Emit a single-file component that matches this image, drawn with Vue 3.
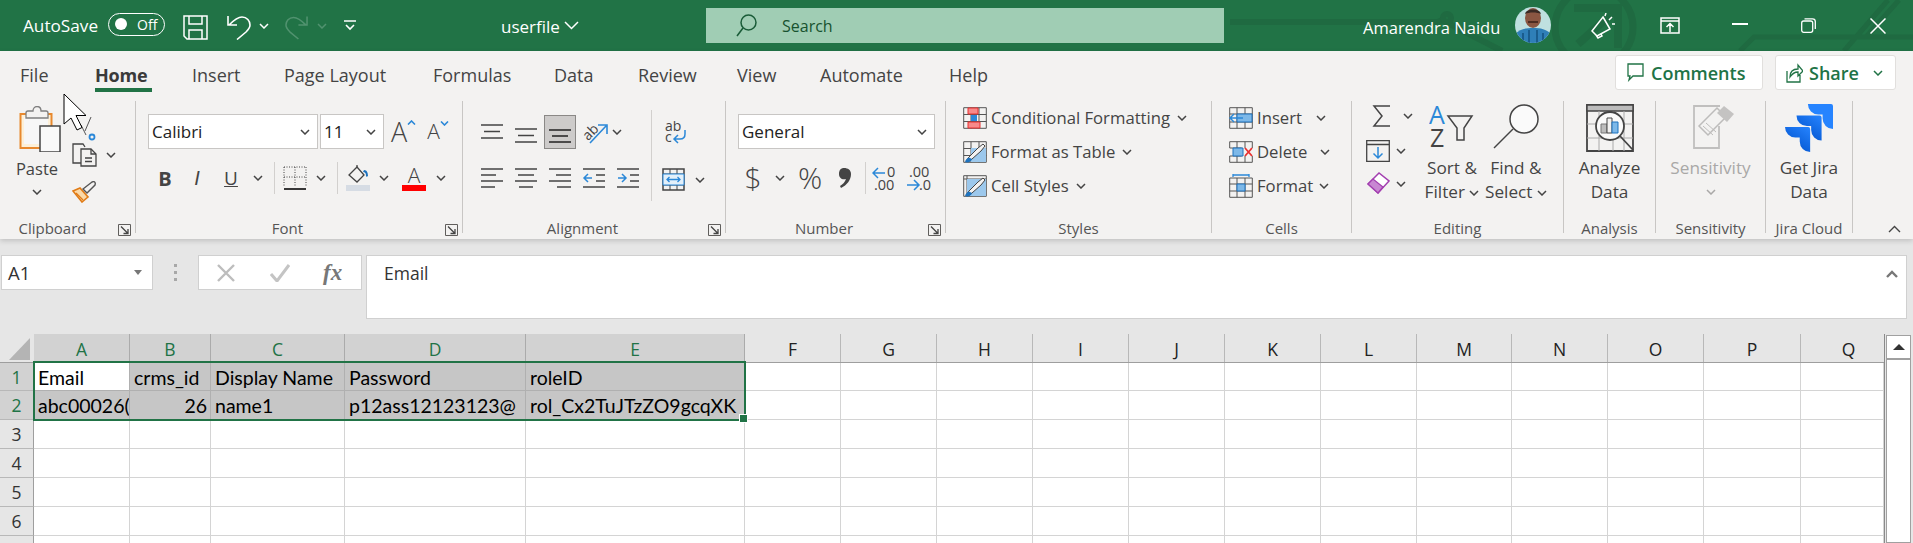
<script setup>
const tabs = [
  { name: 'File', w: 75 }, { name: 'Home', w: 97, active: true }, { name: 'Insert', w: 92 },
  { name: 'Page Layout', w: 149 }, { name: 'Formulas', w: 121 }, { name: 'Data', w: 84 },
  { name: 'Review', w: 99 }, { name: 'View', w: 83 }, { name: 'Automate', w: 129 }, { name: 'Help', w: 60 }
]
const cols = [
  { n: 'A', w: 96, sel: true }, { n: 'B', w: 81, sel: true }, { n: 'C', w: 134, sel: true },
  { n: 'D', w: 181, sel: true }, { n: 'E', w: 219, sel: true }, { n: 'F', w: 96 }, { n: 'G', w: 96 },
  { n: 'H', w: 96 }, { n: 'I', w: 96 }, { n: 'J', w: 96 }, { n: 'K', w: 96 }, { n: 'L', w: 96 },
  { n: 'M', w: 95 }, { n: 'N', w: 96 }, { n: 'O', w: 96 }, { n: 'P', w: 97 }, { n: 'Q', w: 83 }
]
const data = [
  ['Email', 'crms_id', 'Display Name', 'Password', 'roleID'],
  ['abc00026(', '26', 'name1', 'p12ass12123123@', 'rol_Cx2TuJTzZO9gcqXK']
]
const rows = [1, 2, 3, 4, 5, 6, 7]
const cellText = (r, c) => (data[r] ? data[r][c] || '' : '')
</script>

<template>
  <div class="app">
    <svg class="defs" aria-hidden="true">
      <defs>
        <symbol id="ch" viewBox="0 0 10 6"><path d="M1 1l4 4 4-4" fill="none" stroke="#444" stroke-width="1.5" /></symbol>
        <symbol id="chw" viewBox="0 0 10 6"><path d="M1 1l4 4 4-4" fill="none" stroke="#fff" stroke-width="1.5" /></symbol>
        <symbol id="launch" viewBox="0 0 13 12"><path d="M.5.5h12v11H.5z" fill="none" stroke="#605e5c" /><path d="M3 2.500l7 7M10 5v4.500H5.500" fill="none" stroke="#444" stroke-width="1.300" /></symbol>
        <linearGradient id="jg" x1="1" y1="0" x2=".3" y2="1"><stop offset="0" stop-color="#2684ff" /><stop offset="1" stop-color="#0052cc" /></linearGradient>
      </defs>
    </svg>

    <header class="title">
      <svg class="title-art" width="1913" height="51" viewBox="0 0 1913 51">
        <g fill="none" stroke="#1f6a41" stroke-width="6">
          <path d="M1230 22h208l4-2 60 31" />
          <circle cx="1447" cy="18" r="4" />
          <circle cx="1594" cy="27" r="39" stroke-width="7" />
          <path d="M1574 8h44v40M1616 10l-38 34" stroke-width="8" />
          <path d="M1740 51l14-14h159M1844 51l44-51M1866 37l33-37" stroke-width="5" />
        </g>
      </svg>
      <span class="autosave">AutoSave</span>
      <span class="toggle"><i class="knob"></i><b>Off</b></span>
      <svg class="t-save" width="25" height="25" viewBox="0 0 25 25" fill="none" stroke="#fff" stroke-width="1.5">
        <path d="M1 1h23v23H4l-3-3zM6 1v8h13V1M6 24v-9h13v9" />
      </svg>
      <svg class="t-undo" width="24" height="25" viewBox="0 0 24 25" fill="none" stroke="#fff" stroke-width="1.6">
        <path d="M2 10C8 4 12 2 15 2c5 0 8 4 8 8 0 3-2 5-4 7l-9 7.500M1 1v9h9" />
      </svg>
      <svg class="t-ch" width="10" height="6"><use href="#chw" /></svg>
      <svg class="t-redo" width="23" height="25" viewBox="0 0 24 25" fill="none" stroke="#51926f" stroke-width="1.6">
        <path d="M22 10C16 4 12 2 9 2c-5 0-8 4-8 8 0 3 2 5 4 7l9 7.500M23 1v9h-9" />
      </svg>
      <svg class="t-ch2" width="10" height="6" viewBox="0 0 10 6"><path d="M1 1l4 4 4-4" fill="none" stroke="#51926f" stroke-width="1.500" /></svg>
      <svg class="t-cust" width="12" height="11" viewBox="0 0 12 11" fill="none" stroke="#fff" stroke-width="1.600">
        <path d="M0 1h12M2 5l4 4 4-4" />
      </svg>
      <span class="filename">userfile</span>
      <svg class="t-file-ch" width="15" height="9" viewBox="0 0 15 9"><path d="M1 1l6.500 6.500L14 1" fill="none" stroke="#fff" stroke-width="1.500" /></svg>
      <div class="search">
        <svg width="21" height="23" viewBox="0 0 21 23" fill="none" stroke="#1a5c38" stroke-width="1.500">
          <circle cx="12.500" cy="8.500" r="7.500" /><path d="M7 14L1 22" />
        </svg>
        <span>Search</span>
      </div>
      <span class="user">Amarendra Naidu</span>
      <svg class="avatar" width="36" height="36" viewBox="0 0 36 36">
        <clipPath id="av"><circle cx="18" cy="18" r="18" /></clipPath>
        <g clip-path="url(#av)">
          <rect width="36" height="36" fill="#bfe0e0" />
          <path d="M0 36V27c5-5 10-6 18-6s13 1 18 6v9z" fill="#2f7fb8" />
          <path d="M8 26v10M14 23v13M22 23v13M28 26v10" stroke="#15507f" stroke-width="1.500" />
          <ellipse cx="18" cy="11" rx="8" ry="10" fill="#8a5642" />
          <path d="M10 7c1-6 15-6 16 0-4-2-12-2-16 0z" fill="#3a2a24" />
          <path d="M13 15h10" stroke="#3a2018" stroke-width="1.500" />
        </g>
      </svg>
      <svg class="t-mega" width="24" height="26" viewBox="0 0 24 26" fill="none" stroke="#fff" stroke-width="1.500">
        <path d="M12 4l7 12-13 7-5-5zM5 22l2 3 4-2-1-2" /><path d="M18 7l3-3M14 3l1-3M21 11h3" />
      </svg>
      <svg class="t-disp" width="20" height="17" viewBox="0 0 20 17" fill="none" stroke="#fff" stroke-width="1.500">
        <path d="M1 1h18v15H1zM1 4h18M10 15V7M6.500 10L10 6.500l3.500 3.500" />
      </svg>
      <i class="t-min"></i>
      <svg class="t-max" width="15" height="15" viewBox="0 0 15 15" fill="none" stroke="#fff" stroke-width="1.300">
        <rect x=".7" y="3" width="11" height="11.300" rx="2" /><path d="M3.500 .8h8c1.500 0 2.800 1.200 2.800 2.800V11" />
      </svg>
      <svg class="t-close" width="16" height="16" viewBox="0 0 16 16"><path d="M.5.5l15 15M15.500.5l-15 15" stroke="#fff" stroke-width="1.500" /></svg>
    </header>

    <section class="ribbon">
      <nav class="tabs">
        <span v-for="t in tabs" :key="t.name" class="tab" :class="{ active: t.active }" :style="{ width: t.w + 'px' }">{{ t.name }}</span>
        <div class="actions">
          <button class="act act-c">
            <svg width="18" height="19" viewBox="0 0 18 19" fill="none" stroke="#217346" stroke-width="1.300"><path d="M1 1h15v12H6l-4 4 1-4H1z" /></svg>
            Comments
          </button>
          <button class="act act-s">
            <svg width="17" height="20" viewBox="0 0 17 20" fill="none" stroke="#217346" stroke-width="1.300"><path d="M1 8v11h13v-7M4 14c0-5 3-8 8-8V2l5 6-5 5V9c-4 0-6 2-8 5z" /></svg>
            Share
            <svg class="act-ch" width="10" height="6" viewBox="0 0 10 6"><path d="M1 1l4 4 4-4" fill="none" stroke="#217346" stroke-width="1.500" /></svg>
          </button>
        </div>
      </nav>

      <div class="groups">
        <!-- Clipboard -->
        <section class="group g-clip">
          <div class="g-body clip-body">
            <div class="paste">
              <svg class="paste-ic" width="42" height="46" viewBox="0 0 42 46">
                <path d="M1.500 8h31v34h-31z" fill="#fdf0d8" stroke="#e8892e" stroke-width="2" />
                <path d="M5 11h24v27H5z" fill="#f7f7f7" />
                <path d="M7 7c0-1 1-2 2-2h5c0-6 8-6 8 0h5c1 0 2 1 2 2v5H7z" fill="#f3f2f1" stroke="#7f7f7f" stroke-width="1.300" />
                <path d="M21 20h20v26H21z" fill="#f9f9f9" stroke="#444" stroke-width="1.500" />
              </svg>
              <span class="paste-t">Paste</span>
              <svg class="ch paste-ch"><use href="#ch" /></svg>
            </div>
            <div class="clip-tools">
              <svg class="cut" width="22" height="24" viewBox="0 0 22 24" fill="none" stroke="#555" stroke-width="1">
                <path d="M15 0L9 14M5 8l5 10" />
                <circle cx="16" cy="20" r="2.500" stroke="#2b88d8" stroke-width="1.800" />
              </svg>
              <div class="copy-row">
                <svg width="25" height="24" viewBox="0 0 25 24" fill="none" stroke="#444" stroke-width="1.300">
                  <path d="M11 20H1V1h10l2 3" /><path d="M9 6h10l5 5v12H9z" fill="#f3f2f1" /><path d="M19 6v5h5M13 15h7M13 18.500h7" />
                </svg>
                <svg class="ch"><use href="#ch" /></svg>
              </div>
              <svg class="brush" width="24" height="22" viewBox="0 0 24 22">
                <path d="M1 10l7-3 8 9-6 5z" fill="#fbd9a8" stroke="#e07b16" stroke-width="1.600" />
                <path d="M4 12l7 7" stroke="#e07b16" stroke-width="1.300" />
                <path d="M11 8l4 4 8-8c1-3-1-4-3-3z" fill="#f3f2f1" stroke="#555" stroke-width="1.400" />
              </svg>
            </div>
          </div>
          <div class="g-label"><span>Clipboard</span><svg class="launch"><use href="#launch" /></svg></div>
        </section>

        <!-- Font -->
        <section class="group g-font">
          <div class="g-body">
            <div class="font-r1">
              <div class="combo c-font"><span>Calibri</span><svg class="ch"><use href="#ch" /></svg></div>
              <div class="combo c-size"><span>11</span><svg class="ch"><use href="#ch" /></svg></div>
              <span class="grow">A<svg width="9" height="5" viewBox="0 0 9 5"><path d="M1 4.500l3.500-3.500L8 4.500" fill="none" stroke="#2b88d8" stroke-width="1.600" /></svg></span>
              <span class="shrink">A<svg width="9" height="5" viewBox="0 0 9 5"><path d="M1 .5L4.500 4 8 .5" fill="none" stroke="#2b88d8" stroke-width="1.600" /></svg></span>
            </div>
            <div class="font-r2">
              <b class="fb">B</b>
              <i class="fi">I</i>
              <u class="fu">U</u>
              <svg class="ch"><use href="#ch" /></svg>
              <i class="vline"></i>
              <svg width="24" height="24" viewBox="0 0 24 24" fill="none" stroke="#444" stroke-dasharray="1 1.500">
                <path d="M1 1h22M1 1v20M23 1v20M12 1v20M1 11h22" /><path d="M1 23h22" stroke-width="1.800" stroke-dasharray="none" stroke="#222" />
              </svg>
              <svg class="ch"><use href="#ch" /></svg>
              <i class="vline"></i>
              <div class="fill-ic">
                <svg width="22" height="20" viewBox="0 0 22 20">
                  <path d="M2 10l8-8 7 8-7 7z" fill="#f3f2f1" stroke="#444" stroke-width="1.300" /><path d="M10 2V0" stroke="#444" stroke-width="1.300" />
                  <path d="M17 5c3 0 4 3 4 6-1 1-2 1-2 0 0-3-1-4-3-4z" fill="#1e73be" />
                </svg>
                <i class="bar bar-fill"></i>
              </div>
              <svg class="ch"><use href="#ch" /></svg>
              <div class="color-ic"><span>A</span><i class="bar bar-red"></i></div>
              <svg class="ch"><use href="#ch" /></svg>
            </div>
          </div>
          <div class="g-label"><span>Font</span><svg class="launch"><use href="#launch" /></svg></div>
        </section>

        <!-- Alignment -->
        <section class="group g-align">
          <div class="g-body align-body">
            <div class="align-main">
              <div class="al-row">
                <svg width="22" height="20" viewBox="0 0 22 20" class="lines"><path d="M0 3h22M3 9.500h16M0 16h22" /></svg>
                <svg width="22" height="20" viewBox="0 0 22 20" class="lines mid"><path d="M0 7h22M3 13.500h16M0 20h22" /></svg>
                <span class="al-active"><svg width="22" height="18" viewBox="0 0 22 18" class="lines dark"><path d="M0 3h22M3 9h16M0 15h22" /></svg></span>
                <svg width="26" height="24" viewBox="0 0 26 24">
                  <text x="0" y="17" transform="rotate(-45 8 12)" class="svgt" font-size="14" fill="#444">ab</text>
                  <path d="M8 23L24 6M16 5h9v9" fill="none" stroke="#2b88d8" stroke-width="1.600" />
                </svg>
                <svg class="ch"><use href="#ch" /></svg>
              </div>
              <div class="al-row r2">
                <svg width="22" height="20" viewBox="0 0 22 20" class="lines"><path d="M0 1h22M0 7h15M0 13h22M0 19h14" /></svg>
                <svg width="22" height="20" viewBox="0 0 22 20" class="lines"><path d="M0 1h22M3 7h16M0 13h22M4 19h14" /></svg>
                <svg width="22" height="20" viewBox="0 0 22 20" class="lines"><path d="M0 1h22M7 7h15M0 13h22M8 19h14" /></svg>
                <svg width="22" height="20" viewBox="0 0 22 20" class="lines"><path d="M0 1h22M13 7h9M13 13h9M0 19h22" /><path d="M9 10H1M5 6l-4 4 4 4" stroke="#2b88d8" /></svg>
                <svg width="22" height="20" viewBox="0 0 22 20" class="lines"><path d="M0 1h22M13 7h9M13 13h9M0 19h22" /><path d="M1 10h8M5 6l4 4-4 4" stroke="#2b88d8" /></svg>
              </div>
            </div>
            <i class="al-div"></i>
            <div class="align-side">
              <svg class="wrap" width="22" height="23" viewBox="0 0 22 23">
                <text x="0" y="10" class="svgt" font-size="14" fill="#444">ab</text>
                <text x="0" y="21" class="svgt" font-size="14" fill="#444">c</text>
                <path d="M20 9v4c0 3-2 5-5 5H9M13 14l-4 4 4 4" fill="none" stroke="#2b88d8" stroke-width="1.500" />
              </svg>
              <div class="merge">
                <svg width="23" height="23" viewBox="0 0 23 23" fill="none">
                  <path d="M1 1h21v21H1z" stroke="#444" stroke-width="1.500" /><path d="M1 6h21M1 17h21M8 1v5M15 1v5M8 17v5M15 17v5" stroke="#444" />
                  <path d="M1 6h21v11H1z" stroke="#2b88d8" fill="#e3f0fa" /><path d="M5 11.500h13M7.500 9l-2.500 2.500L7.500 14M15.500 9l2.500 2.500-2.500 2.500" stroke="#2b88d8" stroke-width="1.300" />
                </svg>
                <svg class="ch"><use href="#ch" /></svg>
              </div>
            </div>
          </div>
          <div class="g-label"><span>Alignment</span><svg class="launch"><use href="#launch" /></svg></div>
        </section>

        <!-- Number -->
        <section class="group g-num">
          <div class="g-body num-body">
            <div class="combo c-gen"><span>General</span><svg class="ch"><use href="#ch" /></svg></div>
            <div class="num-r2">
              <span class="big">$</span>
              <svg class="ch"><use href="#ch" /></svg>
              <span class="big">%</span>
              <svg width="13" height="20" viewBox="0 0 13 20"><path d="M6 0c4 0 7 2 7 6 0 6-4 11-10 14l-1-2c3-2 5-4 6-7-4 1-7-1-7-5 0-4 2-6 5-6z" fill="#444" /></svg>
              <i class="vline"></i>
              <svg width="24" height="25" viewBox="0 0 24 25">
                <path d="M13 7H1M6 2L1 7l5 5" fill="none" stroke="#2b88d8" stroke-width="1.500" />
                <text x="15" y="11" class="svgt" font-size="14.500" fill="#444">0</text>
                <text x="2" y="24" class="svgt" font-size="14.500" fill="#444">.00</text>
              </svg>
              <svg width="25" height="25" viewBox="0 0 25 25">
                <text x="3" y="11" class="svgt" font-size="14.500" fill="#444">.00</text>
                <path d="M1 19h12M8 14l5 5-5 5" fill="none" stroke="#2b88d8" stroke-width="1.500" />
                <text x="13" y="24" class="svgt" font-size="14.500" fill="#444">.0</text>
              </svg>
            </div>
          </div>
          <div class="g-label"><span>Number</span><svg class="launch"><use href="#launch" /></svg></div>
        </section>

        <!-- Styles -->
        <section class="group g-styles">
          <div class="g-body">
            <div class="s-row">
              <svg width="24" height="22" viewBox="0 0 24 22" fill="none">
                <path d="M.7.7h22.600v20.600H.7zM8 .7v20.600M16 .7v20.600M.7 7.500h22.600M.7 14.500h22.600" stroke="#555" />
                <path d="M5 1h10v6H5zM5 15h12v6H5z" fill="#f78a8a" stroke="#e83030" /><path d="M8 8h6v6H8z" fill="#2b88d8" />
              </svg>
              <span>Conditional Formatting</span><svg class="ch"><use href="#ch" /></svg>
            </div>
            <div class="s-row">
              <svg width="24" height="22" viewBox="0 0 24 22" fill="none">
                <path d="M.7.700h22.600v20.600H.7zM8 .7v20.600M16 .7v20.600M.7 7.500h22.600M.7 14.500h22.600" stroke="#555" />
                <path d="M8 7h15v14H8z" fill="#9cc8ec" /><path d="M3 20l3-4 9-9 5-4 2 2-4 5-9 8c-2 2-4 3-6 2z" fill="#f3f2f1" stroke="#444" /><path d="M2 21c1-3 3-5 5-4l2 1c-1 3-4 4-7 3z" fill="#1e73be" />
              </svg>
              <span>Format as Table</span><svg class="ch"><use href="#ch" /></svg>
            </div>
            <div class="s-row">
              <svg width="24" height="22" viewBox="0 0 24 22" fill="none">
                <path d="M.7.700h22.600v20.600H.7zM.7 4h22.600M4 .7v20.600" stroke="#555" />
                <path d="M4 4h19v17H4z" fill="#9cc8ec" /><path d="M3 20l3-4 9-9 5-4 2 2-4 5-9 8c-2 2-4 3-6 2z" fill="#f3f2f1" stroke="#444" /><path d="M2 21c1-3 3-5 5-4l2 1c-1 3-4 4-7 3z" fill="#1e73be" />
              </svg>
              <span>Cell Styles</span><svg class="ch"><use href="#ch" /></svg>
            </div>
          </div>
          <div class="g-label"><span>Styles</span></div>
        </section>

        <!-- Cells -->
        <section class="group g-cells">
          <div class="g-body">
            <div class="s-row c-ins">
              <svg width="24" height="22" viewBox="0 0 24 22" fill="none">
                <path d="M.7.700h22.600v20.600H.7zM8 .7v20.600M16 .7v20.600M.7 7h22.600M.7 15h22.600" stroke="#555" />
                <path d="M8 7h15v8H8z" fill="#7db8e8" stroke="#1e73be" /><path d="M14 11H1M5 7l-4 4 4 4" stroke="#2b88d8" stroke-width="1.500" />
              </svg>
              <span>Insert</span><svg class="ch"><use href="#ch" /></svg>
            </div>
            <div class="s-row c-del">
              <svg width="24" height="22" viewBox="0 0 24 22" fill="none">
                <path d="M.7.700h22.600M.7 21.300h22.600M.7.700V7M.7 15v6.300M23.300.700V7M23.300 15v6.300M8 .7V7M16 .7V7M8 15v6.300M16 15v6.300M.7 7h12M.7 15h12" stroke="#555" />
                <path d="M4 7h10v8H4z" fill="#7db8e8" stroke="#1e73be" /><path d="M16 7l7 8M23 7l-7 8" stroke="#e83030" stroke-width="1.800" />
              </svg>
              <span>Delete</span><svg class="ch"><use href="#ch" /></svg>
            </div>
            <div class="s-row c-fmt">
              <svg width="24" height="24" viewBox="0 0 24 24" fill="none">
                <path d="M.7 4h22.600v19.300H.7zM8 4v19.300M16 4v19.300M.7 10h22.600M.7 17h22.600" stroke="#555" />
                <path d="M8 10h8v7H8z" fill="#7db8e8" stroke="#1e73be" /><path d="M4 1h16M4 0v3M20 0v3" stroke="#2b88d8" stroke-width="1.300" />
              </svg>
              <span>Format</span><svg class="ch"><use href="#ch" /></svg>
            </div>
          </div>
          <div class="g-label"><span>Cells</span></div>
        </section>

        <!-- Editing -->
        <section class="group g-edit">
          <div class="g-body edit-body">
            <div class="edit-left">
              <div class="e-row e1">
                <svg width="19" height="22" viewBox="0 0 19 22" fill="none" stroke="#444" stroke-width="1.500"><path d="M18 1H2l8 10-8 10h16" /></svg>
                <svg class="ch"><use href="#ch" /></svg>
              </div>
              <div class="e-row e2">
                <svg width="24" height="22" viewBox="0 0 24 22" fill="none"><path d="M.7.700h22.600v20.600H.7zM.7 4.500h22.600" stroke="#444" stroke-width="1.300" /><path d="M12 7v11M7.500 13.500L12 18l4.500-4.500" stroke="#2b88d8" stroke-width="1.500" /></svg>
                <svg class="ch"><use href="#ch" /></svg>
              </div>
              <div class="e-row e3">
                <svg width="23" height="23" viewBox="0 0 23 23"><path d="M1 12L12 1l10 8-11 12z" fill="#fff" stroke="#a33fb0" stroke-width="1.500" /><path d="M1 12l5-5 10 8-5 6z" fill="#c887d2" stroke="#a33fb0" stroke-width="1.300" /></svg>
                <svg class="ch"><use href="#ch" /></svg>
              </div>
            </div>
            <div class="bigbtn b-sort">
              <div class="bigicon">
                <svg width="46" height="44" viewBox="0 0 46 44">
                  <text x="0" y="20" class="svgt" font-size="25" fill="#2b88d8">A</text>
                  <text x="1" y="43" class="svgt" font-size="25" fill="#444">Z</text>
                  <path d="M19 12h24l-8 12v12h-7V24z" fill="#f3f2f1" stroke="#444" stroke-width="1.500" />
                </svg>
              </div>
              <span>Sort &amp;</span>
              <span>Filter <svg class="ch"><use href="#ch" /></svg></span>
            </div>
            <div class="bigbtn b-find">
              <div class="bigicon">
                <svg width="46" height="46" viewBox="0 0 46 46" fill="none" stroke="#444" stroke-width="1.500"><circle cx="31" cy="15" r="14" fill="#fafafa" /><path d="M20 25L1 44" /></svg>
              </div>
              <span>Find &amp;</span>
              <span>Select <svg class="ch"><use href="#ch" /></svg></span>
            </div>
          </div>
          <div class="g-label"><span>Editing</span></div>
        </section>

        <!-- Analysis -->
        <section class="group g-ana">
          <div class="g-body">
            <div class="bigbtn">
              <div class="bigicon">
                <svg width="48" height="48" viewBox="0 0 48 48" fill="none">
                  <path d="M1 1h46v46H1z" fill="#f3f2f1" stroke="#444" stroke-width="1.800" />
                  <path d="M1 1h46v6H1z" fill="#bcbcbc" stroke="#444" stroke-width="1.400" />
                  <path d="M1 20h46M1 34h46M13 7v40M27 7v40M38 7v40" stroke="#aaa" />
                  <circle cx="24" cy="22" r="14" fill="#fafafa" stroke="#444" stroke-width="1.800" />
                  <path d="M34 32l13 14" stroke="#444" stroke-width="1.800" />
                  <path d="M15 20h6v9h-6z" fill="#bcbcbc" stroke="#777" /><path d="M21 14h5v15h-5z" fill="#f3f2f1" stroke="#444" /><path d="M26 18h6v11h-6z" fill="#7db8e8" stroke="#1e73be" />
                </svg>
              </div>
              <span>Analyze</span><span>Data</span>
            </div>
          </div>
          <div class="g-label"><span>Analysis</span></div>
        </section>

        <!-- Sensitivity -->
        <section class="group g-sens">
          <div class="g-body">
            <div class="bigbtn dim">
              <div class="bigicon sens-ic">
                <svg width="42" height="46" viewBox="0 0 42 46" fill="none">
                  <path d="M27 2H1v42h25V22" stroke="#c0bfbe" stroke-width="1.800" />
                  <path d="M6 22L24 4l9 9-18 18z" fill="#f3f2f1" stroke="#bdbcbb" stroke-width="1.500" />
                  <path d="M10 22l10 9M13 19l10 9" stroke="#bdbcbb" />
                  <path d="M24 9l7-7 10 8-7 8z" fill="#c4c3c2" />
                </svg>
              </div>
              <span>Sensitivity</span>
              <svg class="ch sens-ch" viewBox="0 0 10 6"><path d="M1 1l4 4 4-4" fill="none" stroke="#a9a8a7" stroke-width="1.500" /></svg>
            </div>
          </div>
          <div class="g-label"><span>Sensitivity</span></div>
        </section>

        <!-- Jira -->
        <section class="group g-jira">
          <div class="g-body">
            <div class="bigbtn">
              <div class="bigicon">
                <svg width="48" height="48" viewBox="0 0 24 24">
                  <path fill="url(#jg)" d="M11.571 11.513H0a5.218 5.218 0 0 0 5.232 5.215h2.13v2.057A5.215 5.215 0 0 0 12.575 24V12.518a1.005 1.005 0 0 0-1.005-1.005z" />
                  <path fill="url(#jg)" d="M17.294 5.757H5.736a5.215 5.215 0 0 0 5.215 5.214h2.129v2.058a5.218 5.218 0 0 0 5.215 5.214V6.758a1.001 1.001 0 0 0-1.001-1.001z" />
                  <path fill="#2684ff" d="M23.013 0H11.455a5.215 5.215 0 0 0 5.215 5.215h2.129v2.057A5.215 5.215 0 0 0 24 12.483V1.005A1.001 1.001 0 0 0 23.013 0z" />
                </svg>
              </div>
              <span>Get Jira</span><span>Data</span>
            </div>
          </div>
          <div class="g-label"><span>Jira Cloud</span></div>
        </section>

        <svg class="collapse" width="13" height="8" viewBox="0 0 13 8"><path d="M1 7l5.500-5.500L12 7" fill="none" stroke="#444" stroke-width="1.400" /></svg>
      </div>
    </section>

    <section class="formula">
      <div class="namebox"><span>A1</span><i class="tri"></i></div>
      <div class="dots"><i></i><i></i><i></i></div>
      <div class="fxbox">
        <svg width="18" height="18" viewBox="0 0 18 18"><path d="M1 1l16 16M17 1L1 17" stroke="#bdbdbd" stroke-width="2.400" /></svg>
        <svg width="20" height="18" viewBox="0 0 20 18"><path d="M1 10l6 7L19 1" fill="none" stroke="#c4c4c4" stroke-width="3" /></svg>
        <span>fx</span>
      </div>
      <div class="bar-input">
        <span>Email</span>
        <svg width="12" height="8" viewBox="0 0 12 8"><path d="M1 7l5-5 5 5" fill="none" stroke="#777" stroke-width="2.400" /></svg>
      </div>
    </section>

    <section class="sheet">
      <div class="gridwrap">
        <div class="hrow">
          <div class="corner"><i></i></div>
          <div v-for="c in cols" :key="c.n" class="ch-head" :class="{ sel: c.sel }" :style="{ width: c.w + 'px' }">{{ c.n }}</div>
        </div>
        <div v-for="(r, ri) in rows" :key="r" class="row">
          <div class="rh" :class="{ sel: ri < 2 }">{{ r }}</div>
          <div
            v-for="(c, ci) in cols"
            :key="c.n"
            class="cell"
            :class="{ sel: ri < 2 && ci < 5, first: ri === 0 && ci === 0, num: ri === 1 && ci === 1 }"
            :style="{ width: c.w + 'px' }"
          >{{ cellText(ri, ci) }}</div>
        </div>
        <div class="selbox"><i class="handle"></i></div>
      </div>
      <aside class="scroll">
        <div class="sb-btn"><i></i></div>
        <div class="sb-track"></div>
      </aside>
    </section>

    <svg class="cursor" width="26" height="38" viewBox="0 0 26 38">
      <path d="M1 1v30l7-6 6 12 5-2.500-6-12h10z" fill="#fff" stroke="#000" stroke-width="1" />
    </svg>
  </div>
</template>

<style>
html, body { margin: 0; background: #e6e6e6; }
</style>

<style scoped>
.app {
  position: relative; width: 1913px; height: 543px; overflow: hidden; background: #e6e6e6;
  font-family: "Open Sans", "Noto Sans", sans-serif; color: #444; font-size: 16px;
}
.defs { position: absolute; width: 0; height: 0; }
.svgt { font-family: "Open Sans", sans-serif; }
.ch { width: 10px; height: 6px; flex: none; }

/* title */
.title { position: relative; height: 51px; background: #217346; color: #fff; display: flex; align-items: center; overflow: hidden; }
.title > * { flex: none; position: relative; }
.title-art { position: absolute !important; left: 0; top: 0; }
.autosave { margin-left: 23px; width: 77px; font-size: 17.2px; margin-top: -1px; white-space: nowrap; }
.toggle { margin-left: 8px; width: 57px; height: 23px; box-sizing: border-box; border: 1px solid #fff; border-radius: 12px; display: flex; align-items: center; padding-left: 6px; margin-top: -3px; }
.knob { width: 12px; height: 12px; background: #fff; border-radius: 50%; }
.toggle b { font-weight: 400; font-size: 14px; margin-left: 10px; }
.t-save { margin-left: 18px; margin-top: 3px; }
.t-undo { margin-left: 19px; margin-top: 3px; }
.t-ch { margin-left: 8px; }
.t-redo { margin-left: 16px; margin-top: 3px; }
.t-ch2 { margin-left: 9px; }
.t-cust { margin-left: 17px; }
.filename { margin-left: 145px; font-size: 17px; width: 56px; margin-top: 1px; }
.t-file-ch { margin-left: 7px; }
.search { margin-left: 127px; width: 518px; height: 35px; background: #a0cdb4; display: flex; align-items: center; padding-left: 30px; box-sizing: border-box; color: #17522f; font-size: 16px; gap: 25px; }
.user { margin-left: 139px; width: 141px; font-size: 16.5px; white-space: nowrap; margin-top: 3px; }
.avatar { margin-left: 11px; margin-top: -1px; }
.t-mega { margin-left: 40px; }
.t-disp { margin-left: 45px; }
.t-min { margin-left: 52px; width: 16px; height: 1.5px; background: #fff; margin-top: -3px; }
.t-max { margin-left: 53px; margin-top: -1px; }
.t-close { margin-left: 54px; }

/* ribbon */
.ribbon { position: relative; z-index: 1; height: 188px; background: #f3f2f1; box-shadow: 0 2px 5px rgba(0, 0, 0, .16); }
.tabs { height: 44px; display: flex; padding-left: 20px; font-size: 18px; position: relative; }
.tab { flex: none; box-sizing: border-box; padding-top: 12px; line-height: 24px; position: relative; white-space: nowrap; }
.tab.active { font-weight: 700; color: #3a3a3a; letter-spacing: -.2px; }
.tab.active::after { content: ""; position: absolute; left: 0; top: 37px; width: 57px; height: 4px; background: #217346; }
.actions { margin-left: auto; display: flex; gap: 12px; padding: 4px 17px 0 0; }
.act { height: 35px; background: #fff; border: 1px solid #e1dfdd; border-radius: 3px; color: #217346; font: 600 18px "Open Sans", sans-serif; display: flex; align-items: center; gap: 6px; padding: 0; box-sizing: border-box; }
.act-c { width: 148px; padding-left: 11px; }
.act-s { width: 121px; padding-left: 10px; }
.act-ch { margin-left: 8px; }

.groups { display: flex; padding-top: 6px; align-items: flex-start; }
.group { flex: none; height: 132px; box-sizing: border-box; border-right: 1px solid #c8c6c4; position: relative; }
.g-body { height: 118px; box-sizing: border-box; }
.g-label { height: 18px; display: flex; align-items: center; font-size: 15px; line-height: 18px; color: #555; }
.g-label span { flex: 1; text-align: center; white-space: nowrap; }
.launch { width: 13px; height: 12px; flex: none; margin: 4px 4px 0 6px; }
.g-clip { width: 136px; } .g-clip .g-label span { padding-right: 7px; }
.g-font { width: 327px; } .g-align { width: 263px; } .g-num { width: 220px; }
.g-styles { width: 266px; } .g-cells { width: 140px; } .g-edit { width: 212px; }
.g-ana { width: 92px; } .g-sens { width: 110px; } .g-jira { width: 87px; }
.collapse { margin: 124px 0 0 35px; }

/* clipboard */
.clip-body { display: flex; }
.paste { width: 72px; padding-left: 2px; box-sizing: border-box; display: flex; flex-direction: column; align-items: center; }
.paste-ic { margin: 5px 0 0 6px; }
.paste-t { margin-top: 6px; font-size: 16.5px; line-height: 22px; }
.paste-ch { margin-top: 9px; }
.clip-tools { display: flex; flex-direction: column; align-items: flex-start; }
.cut { margin: 16px 0 0 4px; }
.copy-row { display: flex; align-items: center; gap: 9px; margin-top: 2px; }
.brush { margin-top: 14px; }

/* combo */
.combo { height: 35px; background: #fff; border: 1px solid #c8c6c4; box-sizing: border-box; display: flex; align-items: center; justify-content: space-between; padding: 0 3px 0 3px; color: #222; font-size: 17px; }
.combo .ch { margin-right: 4px; }
.c-font { width: 170px; }
.c-size { width: 64px; margin-left: 2px; }
.num-body { padding-top: 13px; }
.c-gen { width: 197px; margin-left: 12px; }

/* font */
.font-r1 { display: flex; align-items: center; padding: 13px 0 0 12px; }
.grow, .shrink { display: flex; align-items: flex-start; color: #444; line-height: 1; }
.grow { font-size: 27px; margin-left: 7px; font-weight: 300; }
.grow svg { margin: 2px 0 0 0; }
.shrink { font-size: 21px; margin-left: 11px; font-weight: 300; }
.font-r2 { display: grid; grid-template-columns: 32px 32px 36px 18px 14px 27px 26px 6px 36px 16px 44px 10px; justify-items: center; align-items: center; height: 36px; margin: 11px 0 0 13px; }
.fb { font-size: 20px; color: #444; }
.fi { font-size: 20px; font-family: "Liberation Sans", sans-serif; color: #444; }
.fu { font-size: 19px; color: #444; font-weight: 400; }
.vline { width: 1px; height: 32px; background: #d2d0ce; }
.fill-ic, .color-ic { display: flex; flex-direction: column; align-items: center; width: 24px; }
.bar { width: 24px; height: 6px; display: block; }
.bar-fill { background: #d6dce4; }
.bar-red { background: #f00; }
.color-ic span { font-size: 21px; line-height: 20px; font-weight: 300; }

/* alignment */
.align-body { display: flex; }
.align-main { width: 188px; padding: 14px 0 0 12px; box-sizing: border-box; }
.al-row { display: grid; grid-template-columns: 34px 34px 34px 36px 8px; justify-items: center; align-items: center; height: 34px; }
.al-row.r2 { grid-template-columns: 34px 34px 34px 34px 34px; margin-top: 12px; }
.lines { fill: none; stroke: #444; stroke-width: 1.5; overflow: visible; }
.lines.dark { stroke: #222; }
.al-active { width: 32px; height: 34px; background: #cdcbca; border: 1px solid #8a8886; box-sizing: border-box; display: flex; justify-content: center; align-items: flex-end; padding-bottom: 3px; }
.al-div { width: 1px; height: 91px; background: #d2d0ce; margin-top: 9px; }
.align-side { padding: 20px 0 0 10px; }
.wrap { display: block; margin-left: 3px; }
.merge { display: flex; align-items: center; gap: 10px; margin-top: 24px; }

/* number */
.num-r2 { display: grid; grid-template-columns: 30px 24px 36px 32px 10px 28px 40px; justify-items: center; align-items: center; height: 36px; margin: 11px 0 0 12px; }
.big { font-size: 30px; font-weight: 300; line-height: 1; }

/* styles / cells */
.s-row { height: 34px; display: flex; align-items: center; font-size: 16.7px; white-space: nowrap; padding-left: 17px; }
.s-row span { margin: -2px 0 0 4px; }
.s-row .ch { margin-left: 7px; }
.c-ins .ch { margin-left: 14px; }
.c-del .ch { margin-left: 13px; }
.c-fmt .ch { margin-left: 6px; }

/* editing */
.edit-body { display: flex; }
.edit-left { width: 70px; padding-left: 14px; box-sizing: border-box; }
.e-row { display: flex; align-items: center; }
.e1 { margin: 4px 0 0 6px; gap: 12px; }
.e2 { margin-top: 13px; gap: 6px; }
.e3 { margin: 10px 0 0 1px; gap: 6px; }
.bigbtn { display: flex; flex-direction: column; align-items: center; font-size: 17.2px; line-height: 24px; white-space: nowrap; }
.bigicon { height: 48px; margin: 3px 0 4px; display: flex; align-items: flex-start; }
.b-sort { width: 60px; }
.b-find { width: 66px; margin-left: 1px; }
.bigbtn .ch { vertical-align: 2px; }
.dim { color: #a9a8a7; }
.sens-ic { margin-left: 6px; }
.sens-ch { margin-top: 9px; }

/* formula */
.formula { height: 95px; box-sizing: border-box; padding-top: 16px; display: flex; align-items: flex-start; }
.namebox { margin-left: 1px; width: 152px; height: 35px; box-sizing: border-box; background: #fff; border: 1px solid #d0d0d0; display: flex; align-items: center; justify-content: space-between; padding: 0 10px 0 6px; font-size: 18.5px; color: #333; }
.tri { width: 0; height: 0; border: 4px solid transparent; border-top: 5px solid #777; border-bottom: 0; }
.dots { width: 45px; height: 35px; display: flex; flex-direction: column; align-items: center; justify-content: center; gap: 4px; }
.dots i { width: 3px; height: 3px; background: #a8a8a8; }
.fxbox { width: 164px; height: 35px; box-sizing: border-box; background: #fff; border: 1px solid #d0d0d0; display: flex; align-items: center; padding-left: 18px; }
.fxbox svg + svg { margin-left: 35px; }
.fxbox span { font: italic bold 23px "Liberation Serif", serif; color: #777; margin-left: 33px; }
.bar-input { margin-left: 4px; width: 1541px; height: 64px; box-sizing: border-box; background: #fff; border: 1px solid #d0d0d0; display: flex; justify-content: space-between; padding: 5px 8px 0 17px; font-size: 17.5px; color: #333; }
.bar-input svg { margin-top: 9px; }

/* sheet */
.sheet { display: flex; height: 209px; }
.gridwrap { position: relative; width: 1885px; flex: none; overflow: hidden; border-right: 1px solid #8a8a8a; box-sizing: border-box; }
.hrow { display: flex; height: 28px; border-bottom: 1px solid #9e9e9e; box-sizing: content-box; }
.corner { width: 34px; flex: none; box-sizing: border-box; position: relative; }
.corner i { display: block; width: 21px; height: 22px; margin: 4px 0 0 9px; background: #b4b4b4; clip-path: polygon(100% 0, 100% 100%, 0 100%); }
.ch-head { flex: none; box-sizing: border-box; text-align: center; font-size: 17.5px; line-height: 30px; color: #222; border-right: 1px solid #b8b8b8; }
.ch-head:last-child { border-right: 0; padding-left: 12px; }
.ch-head.sel { background: #d2d2d2; color: #217346; border-right-color: #ababab; }
.row { display: flex; height: 29px; }
.hrow + .row { height: 28px; }
.rh { width: 34px; flex: none; box-sizing: border-box; text-align: center; font-size: 17.5px; line-height: 29px; background: #e6e6e6; color: #333; border-right: 1px solid #9e9e9e; border-bottom: 1px solid #b8b8b8; }
.rh.sel { background: #d2d2d2; color: #217346; }
.cell { flex: none; box-sizing: border-box; background: #fff; border-right: 1px solid #d4d4d4; border-bottom: 1px solid #d4d4d4; font-family: Lato, "Liberation Sans", sans-serif; font-size: 19.5px; line-height: 29px; color: #000; padding-left: 4px; overflow: hidden; white-space: nowrap; }
.cell.sel { background: #c6c6c6; border-color: #b0b0b0; }
.cell.first { background: #fff; }
.cell.num { text-align: right; padding: 0 3px 0 0; }
.selbox { position: absolute; left: 33px; top: 27px; width: 713px; height: 60px; border: 2.5px solid #217346; box-sizing: border-box; }
.handle { position: absolute; right: -4px; bottom: -4px; width: 7px; height: 7px; background: #217346; border: 1px solid #fff; }
.scroll { width: 25px; margin-left: 1px; display: flex; flex-direction: column; }
.sb-btn { height: 25px; margin-top: 1px; box-sizing: border-box; background: #fff; border: 1px solid #a0a0a0; border-bottom: 2px solid #a0a0a0; display: flex; align-items: center; justify-content: center; }
.sb-btn i { width: 0; height: 0; border: 6px solid transparent; border-bottom: 6px solid #333; border-top: 0; }
.sb-track { flex: 1; background: #fff; border: 1px solid #a0a0a0; border-top: 0; }
.cursor { position: absolute; left: 63px; top: 93px; z-index: 3; }
</style>
